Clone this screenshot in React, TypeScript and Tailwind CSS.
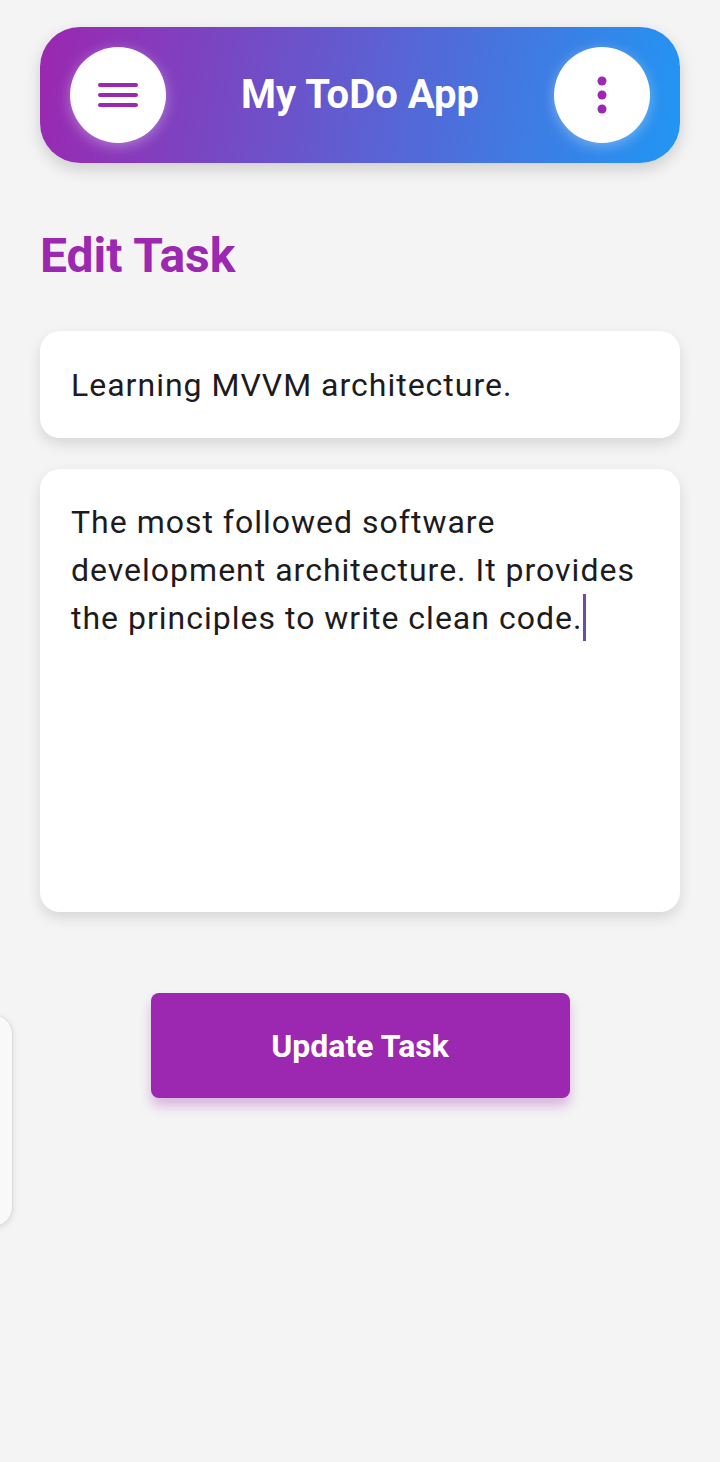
import React from 'react';

export default function App() {
  return (
    <div className="relative min-h-[1462px] w-full overflow-hidden bg-[#f4f4f4] font-['Roboto',sans-serif]">
      <div className="px-10 pt-[27px]">
        {/* Gradient app bar */}
        <header className="flex h-[136px] items-center justify-between rounded-[40px] bg-[linear-gradient(100deg,#9c27b0_0%,#2196f3_100%)] px-[30px] shadow-[0_6px_16px_rgba(0,0,0,0.16)]">
          <button className="flex h-24 w-24 items-center justify-center rounded-full bg-white shadow-[0_3px_14px_rgba(255,255,255,0.35)]">
            <svg width="40" height="30" viewBox="0 0 40 30">
              <rect x="0" y="3" width="40" height="4" rx="2" fill="#9c27b0" />
              <rect x="0" y="13" width="40" height="4" rx="2" fill="#9c27b0" />
              <rect x="0" y="23" width="40" height="4" rx="2" fill="#9c27b0" />
            </svg>
          </button>
          <h1 className="text-[40px] font-bold leading-none text-white">My ToDo App</h1>
          <button className="flex h-24 w-24 items-center justify-center rounded-full bg-white shadow-[0_3px_14px_rgba(255,255,255,0.35)]">
            <svg width="12" height="40" viewBox="0 0 12 40">
              <circle cx="6" cy="6" r="4.5" fill="#9c27b0" />
              <circle cx="6" cy="20" r="4.5" fill="#9c27b0" />
              <circle cx="6" cy="34" r="4.5" fill="#9c27b0" />
            </svg>
          </button>
        </header>

        <h2 className="mt-[65px] text-[48px] font-bold leading-[56px] text-[#9c27b0]">Edit Task</h2>

        {/* Title field */}
        <div className="mt-[47px] flex h-[107px] items-center rounded-[20px] bg-white px-[31px] shadow-[0_6px_14px_rgba(0,0,0,0.12)]">
          <span className="text-[32px] leading-[48px] tracking-[1px] text-[#1d1b20]">Learning MVVM architecture.</span>
        </div>

        {/* Description field */}
        <div className="mt-[31px] h-[443px] rounded-[20px] bg-white px-[31px] pt-[29px] shadow-[0_6px_14px_rgba(0,0,0,0.12)]">
          <p className="text-[32px] leading-[48px] tracking-[1px] text-[#1d1b20]">
            The most followed software development architecture. It provides the principles to write clean code.
            <span className="ml-[1px] inline-block h-[47px] w-[3px] bg-[#6750a4] align-top" />
          </p>
        </div>

        <div className="mt-[81px] flex justify-center">
          <button className="h-[105px] w-[419px] rounded-[8px] bg-[#9c27b0] text-[32px] font-bold text-white shadow-[0_8px_12px_rgba(156,39,176,0.3)]">
            Update Task
          </button>
        </div>
      </div>

      {/* Peeking sheet on the left edge */}
      <div className="absolute left-[-40px] top-[1014px] h-[213px] w-[53px] rounded-[20px] border border-[#dcdcdc] bg-[#f9f9f9] shadow-[0_2px_6px_rgba(0,0,0,0.1)]" />
    </div>
  );
}
